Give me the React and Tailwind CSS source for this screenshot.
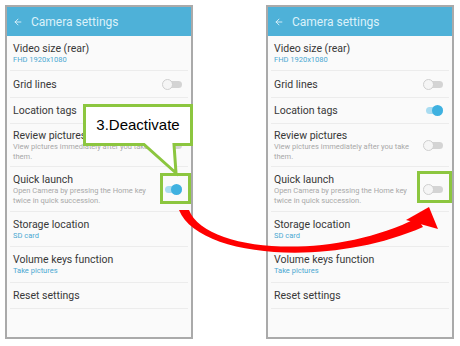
import React from "react";
import { ArrowLeft } from "lucide-react";

const rows = [
  { t: "Video size (rear)", s: ["FHD 1920x1080"], h: "h-[35px]", blue: true },
  { t: "Grid lines", toggle: "grid", h: "h-[27px]" },
  { t: "Location tags", toggle: "loc", h: "h-[26px]" },
  { t: "Review pictures", s: ["View pictures immediately after you take", "them."], toggle: "review", h: "h-[43px]" },
  { t: "Quick launch", s: ["Open Camera by pressing the Home key", "twice in quick succession."], toggle: "quick", h: "h-[45px]" },
  { t: "Storage location", s: ["SD card"], h: "h-[35px]", blue: true },
  { t: "Volume keys function", s: ["Take pictures"], h: "h-[36px]", blue: true },
  { t: "Reset settings", h: "h-[26px]" },
];

function Toggle({ on }) {
  return (
    <div className="relative w-[20px] h-[11px] mr-[3px] shrink-0">
      <div className={`absolute left-[3px] right-0 top-[2px] h-[7px] rounded-full ${on ? "bg-[#a9dcf1]" : "bg-[#d4d4d4]"}`} />
      <div
        className={`absolute top-0 w-[11px] h-[11px] rounded-full ${
          on ? "right-0 bg-[#3fb1e0]" : "left-0 bg-[#f5f5f5] border border-[#cfcfcf]"
        }`}
      />
    </div>
  );
}

function Phone({ states }) {
  return (
    <div className="w-[188px] h-[334px] border-2 border-[#aaaaaa] bg-[#fafafa] flex flex-col">
      <div className="h-[29px] bg-[#4eb1d8] flex items-center pl-[6px] gap-[8px] text-[#dcf1fa]">
        <ArrowLeft size={10} strokeWidth={2.2} />
        <span className="text-[12px] leading-none">Camera settings</span>
      </div>
      <div className="mx-[3px] flex flex-col">
        {rows.map((r, i) => (
          <div key={i} className={`${r.h} border-b border-[#ececec] px-[3px] flex items-center justify-between`}>
            <div className="flex flex-col">
              <div className="text-[10.5px] leading-[13px] text-[#383838]">{r.t}</div>
              {r.s &&
                r.s.map((l, j) => (
                  <div key={j} className={`text-[7.5px] leading-[10px] ${r.blue ? "text-[#4aa8d2]" : "text-[#a8a8a8]"}`}>
                    {l}
                  </div>
                ))}
            </div>
            {r.toggle && <Toggle on={states[r.toggle]} />}
          </div>
        ))}
      </div>
    </div>
  );
}

export default function App() {
  return (
    <div className="relative w-[460px] h-[346px] bg-white overflow-hidden" style={{ fontFamily: "Roboto, 'Noto Sans', sans-serif" }}>
      <div className="flex gap-[73px] pl-[5px] pt-[5px]">
        <Phone states={{ grid: false, loc: true, review: false, quick: true }} />
        <Phone states={{ grid: false, loc: true, review: false, quick: false }} />
      </div>
      <svg className="absolute inset-0 pointer-events-none" width="460" height="346" viewBox="0 0 460 346">
        <path
          d="M84.5,105.5 H191.5 V144.5 H174 L176,173 L144,144.5 H84.5 Z"
          fill="#ffffff"
          stroke="#8cc63f"
          strokeWidth="3"
          strokeLinejoin="miter"
        />
        <rect x="161.5" y="174.5" width="28" height="28" fill="none" stroke="#8cc63f" strokeWidth="3" />
        <rect x="418.5" y="172.5" width="32" height="29" fill="none" stroke="#8cc63f" strokeWidth="3" />
        <path
          d="M189,210 C205,252 330,262 417,218 L423,227 C330,268 198,258 179,210 Z"
          fill="#ff0000"
        />
        <path d="M406,220 L429,207 L438,229 Z" fill="#ff0000" />
      </svg>
      <div className="absolute left-[86px] top-[107px] w-[104px] h-[37px] flex items-center justify-center text-[15px] text-black" style={{ fontFamily: "'Liberation Sans', Arial, sans-serif" }}>
        3.Deactivate
      </div>
    </div>
  );
}
